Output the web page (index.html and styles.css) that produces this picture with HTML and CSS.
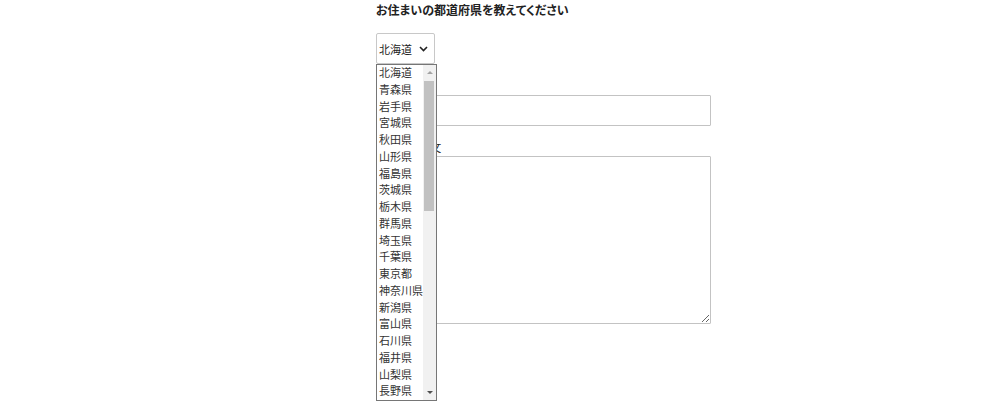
FILE: index.html
```html
<!DOCTYPE html>
<html lang="ja">
<head>
    <meta charset="UTF-8">
    <meta name="viewport" content="width=device-width, initial-scale=1.0">
    <title>お問合せ</title>
    <link rel="stylesheet" href="styles.css">
</head>
<body>
    <form class="contact-form">
        <p class="question">お住まいの都道府県を教えてください</p>

        <div class="select-wrap">
            <div class="select-box">
                <span>北海道</span>
                <svg class="chevron" width="9" height="6" viewBox="0 0 9 6">
                    <path d="M1 1 L4.5 4.5 L8 1" fill="none" stroke="#222" stroke-width="1.6"/>
                </svg>
            </div>
            <div class="dropdown">
                <ul class="options">
                    <li>北海道</li>
                    <li>青森県</li>
                    <li>岩手県</li>
                    <li>宮城県</li>
                    <li>秋田県</li>
                    <li>山形県</li>
                    <li>福島県</li>
                    <li>茨城県</li>
                    <li>栃木県</li>
                    <li>群馬県</li>
                    <li>埼玉県</li>
                    <li>千葉県</li>
                    <li>東京都</li>
                    <li>神奈川県</li>
                    <li>新潟県</li>
                    <li>富山県</li>
                    <li>石川県</li>
                    <li>福井県</li>
                    <li>山梨県</li>
                    <li>長野県</li>
                </ul>
                <div class="scrollbar">
                    <span class="arrow up"></span>
                    <div class="track">
                        <div class="thumb"></div>
                    </div>
                    <span class="arrow down"></span>
                </div>
            </div>
        </div>

        <label for="name" class="field-label">お名前</label>
        <input type="text" id="name" class="text-input">

        <label for="body" class="field-label">お問合せ本文</label>
        <textarea id="body" class="text-area"></textarea>
    </form>
</body>
</html>
```

FILE: styles.css
```css
html, body {
    height: 100%;
}
body {
    margin: 0;
    padding: 0;
    background: #fff;
    color: #222;
    font-family: "Noto Sans CJK JP", "Noto Sans", sans-serif;
    font-feature-settings: "palt";
}
.contact-form {
    width: 335px;
    margin-left: 376px;
    display: flex;
    flex-direction: column;
}
.question {
    margin: 2px 0 0;
    font-size: 12px;
    font-weight: bold;
    line-height: 16px;
}
.select-wrap {
    position: relative;
    margin: 15px 0 1px;
    width: 59px;
}
.select-box {
    height: 29px;
    border: 1px solid #c8c8c8;
    border-radius: 2px;
    display: flex;
    align-items: center;
    justify-content: space-between;
    padding: 0 6px 0 2px;
    font-size: 11px;
}
.chevron {
    margin-top: 1px;
}
.dropdown {
    position: absolute;
    top: 31px;
    left: 0;
    width: 59px;
    height: 335px;
    border: 1px solid #767676;
    background: #fff;
    display: flex;
    z-index: 2;
}
.options {
    list-style: none;
    margin: 0;
    padding: 0;
    flex: 1;
    font-size: 11px;
    color: #333;
}
.options li {
    height: 16.75px;
    line-height: 14px;
    padding-left: 2px;
    white-space: nowrap;
}
.scrollbar {
    width: 13px;
    background: #f1f1f1;
    display: flex;
    flex-direction: column;
    align-items: center;
}
.arrow {
    width: 0;
    height: 0;
    border-left: 3px solid transparent;
    border-right: 3px solid transparent;
    margin: 6px 0;
}
.arrow.up {
    border-bottom: 3px solid #a3a3a3;
}
.arrow.down {
    border-top: 3px solid #505050;
}
.track {
    flex: 1;
    width: 100%;
}
.thumb {
    margin: 1px 2px 0 1px;
    height: 130px;
    background: #c1c1c1;
}
.field-label {
    font-size: 11px;
    line-height: 13px;
    margin: 15px 0 2px;
}
.text-input {
    height: 31px;
    box-sizing: border-box;
    border: 1px solid #c3c3c3;
    border-radius: 1px;
    padding: 0 6px;
}
.text-area {
    height: 168px;
    box-sizing: border-box;
    border: 1px solid #c3c3c3;
    border-radius: 1px;
    padding: 6px;
    resize: vertical;
}
```
